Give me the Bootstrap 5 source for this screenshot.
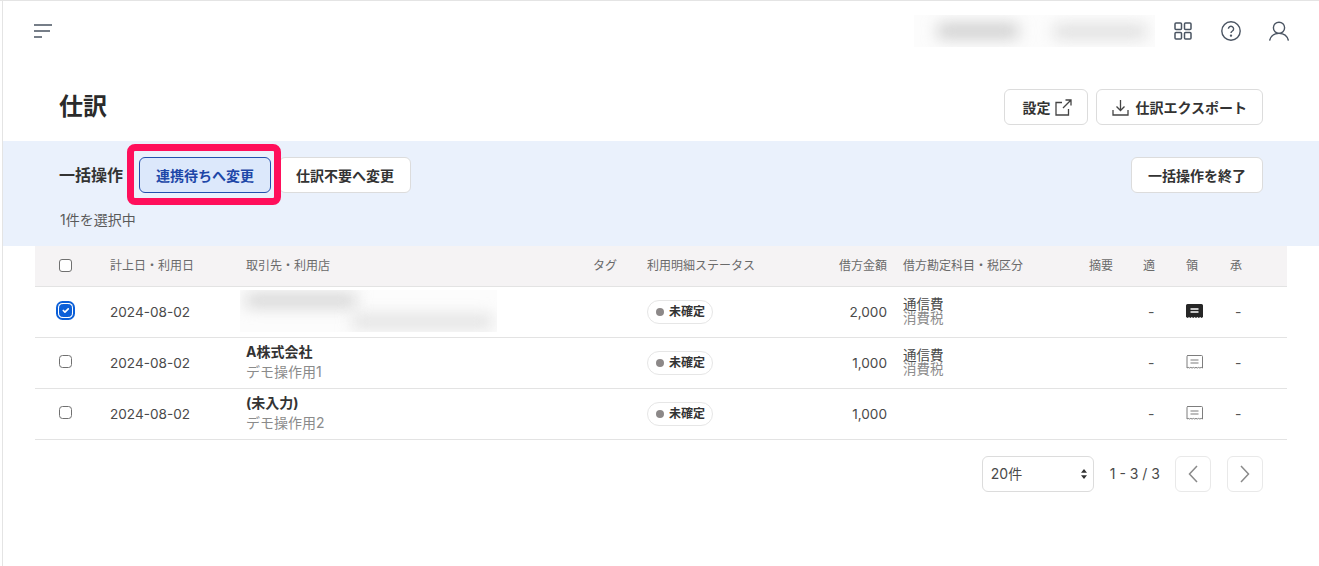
<!doctype html>
<html lang="ja">
<head>
<meta charset="utf-8">
<title>仕訳</title>
<link rel="stylesheet" href="https://cdn.jsdelivr.net/npm/bootstrap@5.3.0/dist/css/bootstrap.min.css">
<style>
html,body{height:100%;overflow:hidden}
body{font-family:Inter,"Noto Sans CJK JP",sans-serif;color:#3a3a3a;background:#fff;padding-left:2px;font-size:14px}
.sk-shell{border-top:1px solid #e4e4e4;margin-left:-2px;padding-left:2px;height:100%}
.sk-main{border-left:1px solid #e4e4e4;height:100%}
.sk-top{height:60px;padding:0 30px 0 31px}
.sk-top svg{display:block}
.sk-blur{width:241px;height:32px;overflow:hidden;background:#fcfcfc;position:relative;margin-right:18px}
.sk-blur i,.sk-rowblur i{display:block;position:absolute;filter:blur(8px)}
.sk-blur i:first-child{left:24px;top:10px;width:80px;height:12px;background:#c2c2c2}
.sk-blur i:last-child{left:140px;top:11px;width:92px;height:11px;background:#d6d6d6}
.sk-iconrow{gap:28px}
.sk-head{padding:28px 56px 16px 57px}
.sk-title{font-size:24px;font-weight:700;line-height:36px;margin:0 0 0 -1px;color:#2b2b2b}
.sk-btn{--bs-btn-font-size:14px;--bs-btn-font-weight:700;--bs-btn-color:#333;--bs-btn-bg:#fff;--bs-btn-border-color:#dcdcdc;--bs-btn-border-radius:6px;--bs-btn-padding-y:0;--bs-btn-padding-x:16px;--bs-btn-hover-color:#333;--bs-btn-hover-bg:#fff;--bs-btn-hover-border-color:#dcdcdc;height:36px;display:inline-flex;align-items:center;gap:6px;white-space:nowrap}
.sk-btn-set{padding:0 15px 0 17px;gap:5px}
.sk-btn-exp{padding:0 15px;gap:6px}
.sk-btn-on{--bs-btn-color:#1e47a8;--bs-btn-bg:#dce8fb;--bs-btn-border-color:#2350ae;--bs-btn-hover-color:#1e47a8;--bs-btn-hover-bg:#dce8fb;--bs-btn-hover-border-color:#2350ae}
.sk-band{background:#eaf1fc;height:105px;padding:16px 56px 0 57px}
.sk-bandlabel{font-size:16px;font-weight:700;color:#333;margin:0 16px 0 -1px}
.sk-count{font-size:14px;color:#5a5a5a;margin-top:17px;line-height:20px}
.sk-mark{position:relative;margin-right:8px;display:inline-flex}
.sk-mark::after{content:"";position:absolute;left:-12px;right:-10px;top:-13px;bottom:-12px;border:7px solid #ff0f5b;border-radius:8px;pointer-events:none}
.sk-tablewrap{margin:0 32px}
.sk-table{table-layout:fixed;width:1252px;margin:0;--bs-table-color:#4a4a4a;--bs-table-border-color:#e3e3e3;border-color:#e3e3e3}
.sk-table th{background:#f5f3f4;font-size:12px;font-weight:400;color:#6a6a6a;height:40px;padding:0 8px;vertical-align:middle;border-bottom:1px solid #e3e3e3}
.sk-table td{height:51px;padding:0 8px;vertical-align:middle;font-size:14px;border-bottom:1px solid #e3e3e3;color:#4a4a4a}
.sk-table .sk-r{text-align:right}
.sk-table td.sk-num{font-size:13.6px;padding-top:2px}
.sk-table td.sk-dash{color:#555;padding-left:13px}
.sk-table td svg{display:block;margin-top:-1px}
.sk-box{width:13px;height:13px;border:1px solid #707070;border-radius:3px;margin:-1px 0 0 16px;display:block;float:none}
.sk-table td .sk-box{margin-top:-3px}
.sk-box:checked{background-color:#0b5fd8;border-color:#0b5fd8;box-shadow:0 0 0 1px #fff,0 0 0 3px #0b5fd8}
.sk-name{font-size:14px;font-weight:700;color:#333;line-height:20px;margin-top:-1px}
.sk-sub{font-size:14px;color:#8b8b8b;line-height:20px}
.sk-rowblur{position:relative;margin-left:-6px;width:257px;height:42px;background:#fcfcfc;overflow:hidden;margin-top:-1px}
.sk-rowblur i:first-child{left:6px;top:5px;width:110px;height:11px;background:#cacaca}
.sk-rowblur i:last-child{left:112px;top:26px;width:140px;height:11px;background:#dadada}
.sk-pill{display:inline-flex;align-items:center;gap:5px;height:24px;padding:0 7px 0 8px;border:1px solid #e6e6e6;border-radius:12px;font-size:12px;font-weight:700;color:#333;background:#fff}
.sk-pill i{width:8px;height:8px;border-radius:50%;background:#8c8888;display:block}
.sk-acc{font-size:13.5px;line-height:14px;color:#4a4a4a;margin-top:-1px}
.sk-acc div+div{color:#8b8b8b}
.sk-foot{padding:16px 24px 0 0}
.sk-select{width:112px;height:36px;font-size:14px;padding:0 20px 0 8px;border-color:#dcdcdc;border-radius:6px;color:#4a4a4a;background-image:url("data:image/svg+xml,%3csvg xmlns='http://www.w3.org/2000/svg' width='6' height='10' viewBox='0 0 6 10'%3e%3cpath d='M3 0l3 3.800H0zM3 10l3-3.800H0z' fill='%23333'/%3e%3c/svg%3e");background-size:6px 10px;background-position:right 6px center}
.sk-range{font-size:14px;color:#4a4a4a;margin:0 15px 0 16px;white-space:nowrap}
.sk-pg{width:36px;height:36px;border:1px solid #e9e9e9;border-radius:6px;padding:0;display:flex;align-items:center;justify-content:center;background:#fff}
.sk-pg+.sk-pg{margin-left:16px}
</style>
</head>
<body>
<div class="sk-shell"><div class="sk-main">
  <header class="sk-top d-flex align-items-center justify-content-between">
    <svg width="18" height="14" viewBox="0 0 18 14" fill="none" stroke="#4a5462" stroke-width="1.6"><path d="M0 1h18M0 7h16M0 13h8"/></svg>
    <div class="d-flex align-items-center">
      <div class="sk-blur"><i></i><i></i></div>
      <div class="d-flex align-items-center sk-iconrow">
        <svg width="20" height="20" viewBox="0 0 20 20" fill="none" stroke="#4a5462" stroke-width="1.5"><rect x="2" y="2" width="6.500" height="6.500" rx="1"/><rect x="11.500" y="2" width="6.500" height="6.500" rx="1"/><rect x="2" y="11.500" width="6.500" height="6.500" rx="1"/><rect x="11.500" y="11.500" width="6.500" height="6.500" rx="1"/></svg>
        <svg width="20" height="20" viewBox="0 0 20 20" fill="none" stroke="#4a5462" stroke-width="1.4"><circle cx="10" cy="10" r="9.200"/><path d="M7.400 7.800a2.600 2.600 0 1 1 4 2.200c-.9.600-1.400 1-1.400 2.100"/><circle cx="10" cy="14.600" r=".5" fill="#4a5462"/></svg>
        <svg width="20" height="20" viewBox="0 0 20 20" fill="none" stroke="#4a5462" stroke-width="1.4"><circle cx="10" cy="6.800" r="5.600"/><path d="M.6 19.600c1-4.400 4.600-7.200 9.400-7.200s8.400 2.800 9.400 7.200"/></svg>
      </div>
    </div>
  </header>

  <div class="sk-head d-flex align-items-center justify-content-between">
    <h1 class="sk-title">仕訳</h1>
    <div class="d-flex gap-2">
      <button type="button" class="btn sk-btn sk-btn-set">設定
        <svg width="17" height="17" viewBox="0 0 17 17" fill="none" stroke="#444" stroke-width="1.3"><path d="M7 3.500H1v12.500h12.500V10M8 9l8-8M10.500 1H16v5.500"/></svg>
      </button>
      <button type="button" class="btn sk-btn sk-btn-exp">
        <svg width="17" height="17" viewBox="0 0 17 17" fill="none" stroke="#444" stroke-width="1.3"><path d="M8.500 1v10M4.500 7.500l4 4 4-4M1 11v5h15v-5"/></svg>
        仕訳エクスポート</button>
    </div>
  </div>

  <section class="sk-band">
    <div class="d-flex align-items-center justify-content-between">
      <div class="d-flex align-items-center">
        <span class="sk-bandlabel">一括操作</span>
        <span class="sk-mark"><button type="button" class="btn sk-btn sk-btn-on">連携待ちへ変更</button></span>
        <button type="button" class="btn sk-btn">仕訳不要へ変更</button>
      </div>
      <button type="button" class="btn sk-btn">一括操作を終了</button>
    </div>
    <div class="sk-count">1件を選択中</div>
  </section>

  <div class="sk-tablewrap">
    <table class="table sk-table">
      <colgroup><col style="width:67px"><col style="width:136px"><col style="width:347px"><col style="width:54px"><col style="width:161px"><col style="width:95px"><col style="width:186px"><col style="width:54px"><col style="width:43px"><col style="width:44px"><col style="width:65px"></colgroup>
      <thead><tr>
        <th><input class="form-check-input sk-box" type="checkbox" aria-label="全選択"></th>
        <th>計上日・利用日</th><th>取引先・利用店</th><th>タグ</th><th>利用明細ステータス</th><th class="sk-r">借方金額</th><th>借方勘定科目・税区分</th><th>摘要</th><th>適</th><th>領</th><th>承</th>
      </tr></thead>
      <tbody>
        <tr>
          <td><input class="form-check-input sk-box" type="checkbox" checked aria-label="選択"></td>
          <td class="sk-num">2024-08-02</td>
          <td><div class="sk-rowblur"><i></i><i></i></div></td>
          <td></td>
          <td><span class="sk-pill"><i></i>未確定</span></td>
          <td class="sk-r sk-num">2,000</td>
          <td><div class="sk-acc"><div>通信費</div><div>消費税</div></div></td>
          <td></td><td class="sk-dash">-</td>
          <td><svg width="17" height="14" viewBox="0 0 17 14"><path d="M1.500 0h14A1.500 1.500 0 0 1 17 1.500V13l-1.400.9-1.400-.9-1.400.9-1.400-.9-1.400.9-1.400-.9-1.400.9-1.400-.9-1.400.9-1.400-.9-1.200.9L0 13V1.500A1.500 1.500 0 0 1 1.500 0z" fill="#262626"/><path d="M4.500 5h8M4.500 8h8" stroke="#fff" stroke-width="1.300"/></svg></td>
          <td class="sk-dash">-</td>
        </tr>
        <tr>
          <td><input class="form-check-input sk-box" type="checkbox" aria-label="選択"></td>
          <td class="sk-num">2024-08-02</td>
          <td><div class="sk-name">A株式会社</div><div class="sk-sub">デモ操作用1</div></td>
          <td></td>
          <td><span class="sk-pill"><i></i>未確定</span></td>
          <td class="sk-r sk-num">1,000</td>
          <td><div class="sk-acc"><div>通信費</div><div>消費税</div></div></td>
          <td></td><td class="sk-dash">-</td>
          <td><svg width="17" height="14" viewBox="0 0 17 14" fill="none" stroke="#7d7d7d"><path d="M1.500.5h14a1 1 0 0 1 1 1V13l-1.300-.6-1.300.6-1.300-.6-1.300.6-1.300-.6-1.300.6-1.300-.6-1.300.6-1.300-.6-1.300.6-1.300-.6-1.200.6V1.500a1 1 0 0 1 1-1z"/><path d="M4.500 5h8M4.500 8h8" stroke-width="1.200"/></svg></td>
          <td class="sk-dash">-</td>
        </tr>
        <tr>
          <td><input class="form-check-input sk-box" type="checkbox" aria-label="選択"></td>
          <td class="sk-num">2024-08-02</td>
          <td><div class="sk-name">(未入力)</div><div class="sk-sub">デモ操作用2</div></td>
          <td></td>
          <td><span class="sk-pill"><i></i>未確定</span></td>
          <td class="sk-r sk-num">1,000</td>
          <td></td>
          <td></td><td class="sk-dash">-</td>
          <td><svg width="17" height="14" viewBox="0 0 17 14" fill="none" stroke="#7d7d7d"><path d="M1.500.5h14a1 1 0 0 1 1 1V13l-1.300-.6-1.300.6-1.300-.6-1.300.6-1.300-.6-1.300.6-1.300-.6-1.300.6-1.300-.6-1.300.6-1.300-.6-1.200.6V1.500a1 1 0 0 1 1-1z"/><path d="M4.500 5h8M4.500 8h8" stroke-width="1.200"/></svg></td>
          <td class="sk-dash">-</td>
        </tr>
      </tbody>
    </table>
    <div class="sk-foot d-flex align-items-center justify-content-end">
      <select class="form-select sk-select" aria-label="表示件数"><option>20件</option></select>
      <span class="sk-range">1 - 3 / 3</span>
      <button type="button" class="sk-pg" aria-label="前へ"><svg width="10" height="18" viewBox="0 0 10 18" fill="none" stroke="#8a8a8a" stroke-width="1.5"><path d="M9 1 1.500 9 9 17"/></svg></button>
      <button type="button" class="sk-pg" aria-label="次へ"><svg width="10" height="18" viewBox="0 0 10 18" fill="none" stroke="#8a8a8a" stroke-width="1.5"><path d="M1 1l7.500 8L1 17"/></svg></button>
    </div>
  </div>
</div></div>
<script src="https://cdn.jsdelivr.net/npm/bootstrap@5.3.0/dist/js/bootstrap.bundle.min.js"></script>
</body>
</html>
